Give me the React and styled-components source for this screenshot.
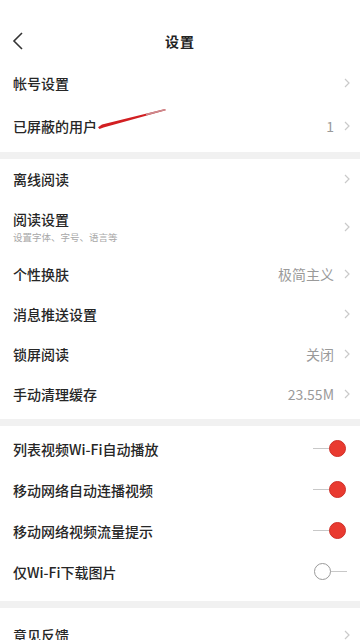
import React from "react";
import styled, {createGlobalStyle} from "styled-components";

const Global = createGlobalStyle`
body {
margin: 0;
background: #ffffff;
font-family: "Noto Sans CJK SC", "Noto Sans", sans-serif;
color: #2a2a2a;
}
`

const Page = styled.div`
width: 360px;
height: 640px;
overflow: hidden;
background: #ffffff;
`

const Nav = styled.div`
display: grid;
grid-template-columns: 48px 1fr 48px;
align-items: center;
height: 42px;
padding-top: 20px;
`
const Back = styled.div`
display: flex;
align-items: center;
padding-left: 12px;
`
const Title = styled.div`
text-align: center;
font-size: 14px;
font-weight: 700;
letter-spacing: 1px;
color: #222;
`

const Group = styled.div`
padding: ${p => p.$pad || "0"};
position: relative;
`
const Separator = styled.div`
height: 7px;
background: #f1f1f1;
`

const Row = styled.div`
display: flex;
align-items: center;
justify-content: space-between;
height: ${p => p.$h || 40}px;
padding: 0 10px 0 13px;
position: relative;
`
const Label = styled.div`
display: flex;
flex-direction: column;
gap: 3px;
`
const Name = styled.div`
font-size: 14px;
font-weight: 500;
color: #262626;
line-height: 18px;
`
const Sub = styled.div`
font-size: 9.5px;
color: #a8a8a8;
line-height: 12px;
`
const Right = styled.div`
display: flex;
align-items: center;
gap: 10px;
`
const Value = styled.div`
font-size: 14px;
color: #9a9a9a;
font-family: "Noto Sans CJK SC", "Liberation Sans", sans-serif;
`

const Switch = styled.div`
position: relative;
width: 34px;
height: 18px;
margin-right: 3px;
`
const Track = styled.div`
position: absolute;
top: 8px;
height: 1.5px;
background: #c8c8c8;
left: ${p => p.$on ? "0" : "17px"};
width: 17px;
`
const Knob = styled.div`
position: absolute;
top: 0;
left: ${p => p.$on ? "16px" : "1px"};
width: 17px;
height: 17px;
box-sizing: border-box;
border-radius: 50%;
background: ${p => p.$on ? "#e93a30" : "#ffffff"};
border: 1.5px solid ${p => p.$on ? "#cf2f27" : "#9a9a9a"};
`

const Pointer = styled.svg`
position: absolute;
left: 96px;
top: 2px;
`

const Chevron = () => (
    <svg width="6" height="10" viewBox="0 0 6 10">
        <path d="M1 1 L5 5 L1 9" fill="none" stroke="#cacaca" strokeWidth="1.2"/>
    </svg>
)

const Toggle = ({on}) => (
    <Switch>
        <Track $on={on}/>
        <Knob $on={on}/>
    </Switch>
)

const Item = ({name, sub, value, h, arrow = true, children}) => (
    <Row $h={h}>
        <Label>
            <Name>{name}</Name>
            {sub && <Sub>{sub}</Sub>}
        </Label>
        {children ? children : (
            <Right>
                {value && <Value>{value}</Value>}
                {arrow && <Chevron/>}
            </Right>
        )}
    </Row>
)

export default function App() {
    return (
        <Page>
            <Global/>
            <Nav>
                <Back>
                    <svg width="14" height="20" viewBox="0 0 14 20">
                        <path d="M10 2 L2 10 L10 18" fill="none" stroke="#333" strokeWidth="1.6"/>
                    </svg>
                </Back>
                <Title>设置</Title>
                <div/>
            </Nav>

            <Group $pad="0 0 5px">
                <Item name="帐号设置" h={42}/>
                <Row $h={43}>
                    <Label><Name>已屏蔽的用户</Name></Label>
                    <Right>
                        <Value>1</Value>
                        <Chevron/>
                    </Right>
                    <Pointer width="72" height="24" viewBox="0 0 72 24">
                        <path d="M2 21.2 L6 18.4 L69 3 L69.8 4.2 L7.5 21.6 L3.5 23 Z" fill="#d21f22"/>
                        <path d="M50 7.8 L69 3 L69.8 4.2 L50 9.4 Z" fill="#c9a0a4" opacity="0.85"/>
                    </Pointer>
                </Row>
            </Group>
            <Separator/>

            <Group $pad="0 0 5px">
                <Item name="离线阅读"/>
                <Item name="阅读设置" sub="设置字体、字号、语言等" h={55}/>
                <Item name="个性换肤" value="极简主义"/>
                <Item name="消息推送设置"/>
                <Item name="锁屏阅读" value="关闭"/>
                <Item name="手动清理缓存" value="23.55M"/>
            </Group>
            <Separator/>

            <Group $pad="2px 0 9px">
                <Item name="列表视频Wi-Fi自动播放" h={41}><Toggle on/></Item>
                <Item name="移动网络自动连播视频" h={41}><Toggle on/></Item>
                <Item name="移动网络视频流量提示" h={41}><Toggle on/></Item>
                <Item name="仅Wi-Fi下载图片" h={41}><Toggle/></Item>
            </Group>
            <Separator/>

            <Group $pad="7px 0 0">
                <Item name="意见反馈"/>
            </Group>
        </Page>
    )
}
